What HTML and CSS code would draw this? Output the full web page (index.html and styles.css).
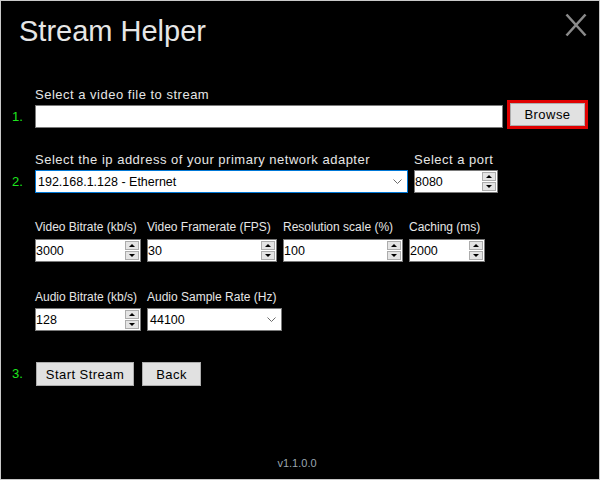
FILE: index.html
```html
<!DOCTYPE html>
<html>
<head>
<meta charset="utf-8">
<link rel="stylesheet" href="styles.css">
</head>
<body>
<div class="window">
  <header class="titlebar">
    <h1 class="title">Stream Helper</h1>
    <svg class="close" viewBox="0 0 22 24" width="22" height="24"><path d="M1.5 1.5 L20.5 22.5 M20.5 1.5 L1.5 22.5" stroke="#8a8a8a" stroke-width="2.6" fill="none"/></svg>
  </header>
  <main class="form">
    <section class="group">
      <div class="label lg">Select a video file to stream</div>
      <div class="row">
        <span class="step">1.</span>
        <div class="box file"></div>
        <div class="browse-outline"><button class="btn browse">Browse</button></div>
      </div>
    </section>

    <section class="group g2">
      <div class="row gap6">
        <div class="field adapter">
          <div class="label lg">Select the ip address of your primary network adapter</div>
          <div class="row">
            <span class="step">2.</span>
            <div class="box combo focus"><span class="val">192.168.1.128 - Ethernet</span><svg class="chev" viewBox="0 0 9 5" width="9" height="5"><path d="M0.5 0.5 L4.5 4.5 L8.5 0.5" stroke="#6b6b6b" stroke-width="1" fill="none"/></svg></div>
          </div>
        </div>
        <div class="field port">
          <div class="label lg">Select a port</div>
          <div class="box num"><span class="nval">8080</span><span class="spin"><span class="up"></span><span class="down"></span></span></div>
        </div>
      </div>
    </section>

    <section class="group g3">
      <div class="row gap6">
        <div class="field w106">
          <div class="label sm">Video Bitrate (kb/s)</div>
          <div class="box num"><span class="nval">3000</span><span class="spin"><span class="up"></span><span class="down"></span></span></div>
        </div>
        <div class="field w130">
          <div class="label sm">Video Framerate (FPS)</div>
          <div class="box num"><span class="nval">30</span><span class="spin"><span class="up"></span><span class="down"></span></span></div>
        </div>
        <div class="field w120">
          <div class="label sm">Resolution scale (%)</div>
          <div class="box num"><span class="nval">100</span><span class="spin"><span class="up"></span><span class="down"></span></span></div>
        </div>
        <div class="field w76">
          <div class="label sm">Caching (ms)</div>
          <div class="box num"><span class="nval">2000</span><span class="spin"><span class="up"></span><span class="down"></span></span></div>
        </div>
      </div>
    </section>

    <section class="group g4">
      <div class="row gap6">
        <div class="field w106">
          <div class="label sm tight">Audio Bitrate (kb/s)</div>
          <div class="box num"><span class="nval">128</span><span class="spin"><span class="up"></span><span class="down"></span></span></div>
        </div>
        <div class="field w135">
          <div class="label sm tight">Audio Sample Rate (Hz)</div>
          <div class="box combo"><span class="val">44100</span><svg class="chev" viewBox="0 0 9 5" width="9" height="5"><path d="M0.5 0.5 L4.5 4.5 L8.5 0.5" stroke="#6b6b6b" stroke-width="1" fill="none"/></svg></div>
        </div>
      </div>
    </section>

    <section class="group g5">
      <div class="row actions">
        <span class="step">3.</span>
        <button class="btn start">Start Stream</button>
        <button class="btn back">Back</button>
      </div>
    </section>
  </main>
  <footer class="version">v1.1.0.0</footer>
</div>
</body>
</html>
```

FILE: styles.css
```css
* { box-sizing: border-box; }
html, body { margin: 0; padding: 0; background: #000; }
body { font-family: "Liberation Sans", Arial, sans-serif; }

.window {
  width: 600px;
  height: 480px;
  border: 1px solid #c9c9c9;
  background: #000;
  display: flex;
  flex-direction: column;
}

.titlebar {
  display: flex;
  justify-content: space-between;
  align-items: flex-start;
  padding: 12px 12px 0 18px;
}
.title {
  margin: 1px 0 0 0;
  font-weight: normal;
  font-size: 29px;
  line-height: 34px;
  color: #e6e6e6;
}
.close { display: block; }

.form { padding: 39px 0 0 34px; }

.label {
  color: #e6e6e6;
  white-space: nowrap;
  line-height: 16px;
}
.label.lg { font-size: 13px; letter-spacing: 0.5px; margin-bottom: 2px; }
.label.sm { font-size: 12px; margin-bottom: 4px; }
.label.sm.tight { margin-bottom: 3px; }

.row { display: flex; align-items: flex-start; }
.gap6 { gap: 6px; }

.step {
  width: 23px;
  margin-left: -23px;
  color: #1ee61e;
  font-size: 13px;
  line-height: 23px;
}

.box {
  height: 23px;
  background: #fff;
  border: 1px solid #7a7a7a;
  display: flex;
  align-items: center;
  font-size: 12.5px;
  color: #000;
  white-space: nowrap;
}
.box.focus { border-color: #0078d7; }
.file { width: 468px; }

.val { padding-left: 2px; }
.nval { padding-left: 0; }
.chev { margin-left: auto; margin-right: 5px; display: block; }

.browse-outline {
  width: 81px;
  height: 29px;
  margin: -5px 0 -1px 4px;
  border: 3px solid #e00000;
  display: flex;
}

.btn {
  background: #e1e1e1;
  border: 1px solid #adadad;
  font-family: "Liberation Sans", Arial, sans-serif;
  font-size: 13px;
  letter-spacing: 0.45px;
  color: #000;
  padding: 0;
  margin: 0;
}
.browse { width: 100%; height: 100%; }

.spin {
  margin-left: auto;
  margin-right: 1px;
  width: 14px;
  height: 19px;
  display: flex;
  flex-direction: column;
  gap: 1px;
}
.spin span {
  flex: 1;
  background: #e4e4e4;
  border: 1px solid #acacac;
  display: flex;
  align-items: center;
  justify-content: center;
}
.spin .up::after {
  content: "";
  border-left: 3px solid transparent;
  border-right: 3px solid transparent;
  border-bottom: 3px solid #000;
}
.spin .down::after {
  content: "";
  border-left: 3px solid transparent;
  border-right: 3px solid transparent;
  border-top: 3px solid #000;
}

.g2 { margin-top: 24px; }
.g3 { margin-top: 26px; }
.g4 { margin-top: 27px; }
.g5 { margin-top: 31px; }

.adapter { width: 373px; }
.adapter .box { width: 373px; }
.port { width: 84px; }
.w106 { width: 106px; }
.w130 { width: 130px; }
.w120 { width: 120px; }
.w76 { width: 76px; }
.w135 { width: 135px; }

.actions { align-items: center; }
.actions .step { line-height: 24px; }
.start { width: 98px; height: 24px; margin-left: 1px; }
.back { width: 59px; height: 24px; margin-left: 8px; }

.version {
  margin-top: auto;
  text-align: center;
  font-size: 11px;
  line-height: 13px;
  color: #9aa6b1;
  padding: 0 6px 9px 0;
}
```
